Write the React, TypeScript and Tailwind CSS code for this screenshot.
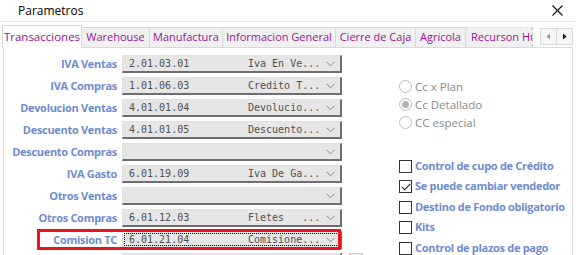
const rows = [
  { label: "IVA Ventas", code: "2.01.03.01", desc: "Iva En Ve..." },
  { label: "IVA Compras", code: "1.01.06.03", desc: "Credito T..." },
  { label: "Devolucion Ventas", code: "4.01.01.04", desc: "Devolucio..." },
  { label: "Descuento Ventas", code: "4.01.01.05", desc: "Descuento..." },
  { label: "Descuento Compras", code: "", desc: "" },
  { label: "IVA Gasto", code: "6.01.19.09", desc: "Iva De Ga..." },
  { label: "Otros Ventas", code: "", desc: "" },
  { label: "Otros Compras", code: "6.01.12.03", desc: "Fletes   ..." },
  { label: "Comision TC", code: "6.01.21.04", desc: "Comisione...", focus: true },
  { label: "", code: "", desc: "", last: true },
];

const tabs = [
  { t: "Warehouse", w: "w-[68px]" },
  { t: "Manufactura", w: "w-[73px]" },
  { t: "Informacion General", w: "w-[113px]" },
  { t: "Cierre de Caja", w: "w-[80px]" },
  { t: "Agricola", w: "w-[50px]" },
  { t: "Recurson Hu", w: "w-[67px]" },
];

const checks = [
  { label: "Control de cupo de Crédito", on: false },
  { label: "Se puede cambiar vendedor", on: true },
  { label: "Destino de Fondo obligatorio", on: false },
  { label: "Kits", on: false },
  { label: "Control de plazos de pago", on: false },
];

function Chevron() {
  return (
    <svg width="9" height="6" viewBox="0 0 9 6" className="shrink-0">
      <path d="M0.5 0.8 L4.5 4.8 L8.5 0.8" fill="none" stroke="#8a8a8a" strokeWidth="1" />
    </svg>
  );
}

function Combo({ code, desc, focus }: { code: string; desc: string; focus?: boolean }) {
  return (
    <div className="w-[220px] h-[18px] bg-[#e6e6e6] border-t border-l border-t-[#e0e0e0] border-l-[#e0e0e0] border-r-2 border-b-2 border-r-[#6e6e6e] border-b-[#6e6e6e] p-[1px] shrink-0">
      <div
        className={
          "h-full flex items-center pl-[5px] pr-[4px] font-['DejaVu_Sans_Mono',monospace] text-[10px] text-[#505050] " +
          (focus ? "outline outline-1 outline-dotted outline-black -outline-offset-1" : "")
        }
      >
        <span className="w-[119px] whitespace-pre">{code}</span>
        <span className="flex-1 whitespace-pre">{desc}</span>
        <Chevron />
      </div>
    </div>
  );
}

export default function App() {
  return (
    <div className="w-[576px] h-[255px] bg-white overflow-hidden relative font-['Open_Sans',sans-serif]">
      {/* title bar */}
      <div className="h-[22px] flex items-center justify-between border-b border-[#e4e4e4]">
        <span className="pl-[18px] text-[12px] text-black">Parametros</span>
        <svg width="11" height="11" viewBox="0 0 11 11" className="mr-[13px]">
          <path d="M0.5 0.5 L10.5 10.5 M10.5 0.5 L0.5 10.5" stroke="#111" strokeWidth="1.1" />
        </svg>
      </div>

      {/* tab strip */}
      <div className="h-[25px] flex items-end pl-[2px] relative">
        <div className="w-[80px] h-[23px] bg-white border border-b-0 border-[#d9d9d9] text-[11.5px] text-[#9c0a98] flex items-center justify-center relative z-10 -mb-px">
          Transacciones
        </div>
        {tabs.map((t, i) => (
          <div
            key={t.t}
            className={
              t.w +
              " h-[20px] bg-[#f0f0f0] border border-l-0 border-b-0 border-[#d9d9d9] text-[11px] text-[#a0109c] flex items-center whitespace-nowrap overflow-hidden " +
              (i === tabs.length - 1 ? "pl-[5px] border-r-[#bbbbbb] border-dashed" : "justify-center")
            }
          >
            {t.t}
          </div>
        ))}
        <div className="ml-auto mr-[3px] mb-[2px] flex">
          <div className="w-[17px] h-[17px] border border-[#d9d9d9] bg-[#f6f6f6] flex items-center justify-center">
            <svg width="5" height="7" viewBox="0 0 5 7"><path d="M4 0.5 L0.5 3.5 L4 6.5 Z" fill="#9a9a9a" /></svg>
          </div>
          <div className="w-[16px] h-[17px] border border-l-0 border-[#d9d9d9] bg-[#f6f6f6] flex items-center justify-center">
            <svg width="5" height="7" viewBox="0 0 5 7"><path d="M1 0.5 L4.5 3.5 L1 6.5 Z" fill="#111" /></svg>
          </div>
        </div>
      </div>

      {/* panel */}
      <div className="ml-[3px] mr-[3px] h-[220px] border-t border-l border-r border-[#d9d9d9] flex pt-[7px]">
        <div className="w-[338px] shrink-0 flex flex-col gap-[4px] relative">
          {rows.map((r, i) => (
            <div key={i} className="flex items-center gap-[5px]">
              <span className="w-[113px] shrink-0 text-right text-[11px] leading-[18px] font-bold text-[#6d8ccf] whitespace-nowrap tracking-[-0.3px]">
                {r.label}
              </span>
              <Combo code={r.code} desc={r.desc} focus={r.focus} />
              {r.last && <div className="ml-[2px] self-start shrink-0 w-[14px] h-[18px] border border-[#c8c8c8] bg-[#eeeeee]" />}
            </div>
          ))}
          <div className="absolute left-[33px] top-[174px] w-[304px] h-[21px] border-[3px] border-[#e8141f]" />
        </div>

        <div className="ml-[57px] flex flex-col">
          <div className="mt-[25px] flex flex-col gap-[5px]">
            {["Cc x Plan", "Cc Detallado", "CC especial"].map((r, i) => (
              <div key={r} className="flex items-center gap-[3px] h-[13px]">
                <div className="w-[13px] h-[13px] rounded-full border border-[#bcbcbc] bg-white flex items-center justify-center">
                  {i === 1 && <div className="w-[7px] h-[7px] rounded-full bg-[#b4b4b4]" />}
                </div>
                <span className="text-[11.5px] text-[#8a8a8a]">{r}</span>
              </div>
            ))}
          </div>
          <div className="mt-[30px] flex flex-col gap-[6.5px]">
            {checks.map((c) => (
              <div key={c.label} className="flex items-center gap-[3px] h-[14px]">
                <div className="w-[13px] h-[13px] border border-[#333] bg-white flex items-center justify-center">
                  {c.on && (
                    <svg width="10" height="8" viewBox="0 0 10 8">
                      <path d="M0.8 3.8 L3.6 6.6 L9.2 1" fill="none" stroke="#333" strokeWidth="1.1" />
                    </svg>
                  )}
                </div>
                <span className="text-[11px] font-bold text-[#6d8ccf] whitespace-nowrap tracking-[-0.3px]">{c.label}</span>
              </div>
            ))}
          </div>
        </div>
      </div>
    </div>
  );
}
